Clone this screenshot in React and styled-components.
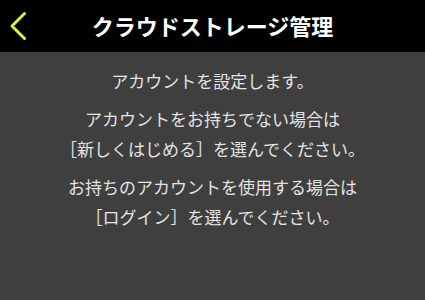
import React from 'react';
import styled, { createGlobalStyle } from 'styled-components';

const GlobalStyle = createGlobalStyle`
  html, body {
    margin: 0;
    padding: 0;
    background: #3f3f3f;
  }
  body {
    font-family: "Noto Sans CJK JP", "Noto Sans", sans-serif;
  }
`;

const messages = [
  ['アカウントを設定します。'],
  ['アカウントをお持ちでない場合は', '［新しくはじめる］を選んでください。'],
  ['お持ちのアカウントを使用する場合は', '［ログイン］を選んでください。'],
];

const App = () => {
  return (
    <>
      <GlobalStyle />
      <Screen>
        <Header>
          <BackButton aria-label="戻る">
            <svg width="18" height="30" viewBox="0 0 18 30">
              <polyline
                points="15.5,2.5 3,15 15.5,27.5"
                fill="none"
                stroke="#d2f23a"
                strokeWidth="3"
                strokeLinecap="round"
                strokeLinejoin="round"
              />
            </svg>
          </BackButton>
          <Title>クラウドストレージ管理</Title>
        </Header>
        <Content>
          {messages.map((lines, i) => (
            <Paragraph key={i}>
              {lines.map((line) => (
                <Line key={line}>{line}</Line>
              ))}
            </Paragraph>
          ))}
        </Content>
      </Screen>
    </>
  );
};

const Screen = styled.div`
  width: 425px;
  height: 300px;
  background: #3f3f3f;
  display: flex;
  flex-direction: column;
  overflow: hidden;
`;

const Header = styled.header`
  position: relative;
  height: 52px;
  background: #000;
  display: flex;
  align-items: center;
  justify-content: center;
  flex-shrink: 0;
`;

const BackButton = styled.button`
  position: absolute;
  left: 9px;
  top: 11px;
  padding: 0;
  border: 0;
  background: none;
  display: flex;
  cursor: pointer;
`;

const Title = styled.h1`
  margin: 0;
  color: #fff;
  font-size: 22px;
  font-weight: 700;
  line-height: 1;
  letter-spacing: 0;
  transform: translateY(-1px);
`;

const Content = styled.main`
  display: flex;
  flex-direction: column;
  align-items: center;
  gap: 8px;
  padding-top: 14px;
`;

const Paragraph = styled.div`
  display: flex;
  flex-direction: column;
  align-items: center;
`;

const Line = styled.p`
  margin: 0;
  color: #e4e4e4;
  font-size: 17px;
  line-height: 30px;
  white-space: nowrap;
`;

export default App;
